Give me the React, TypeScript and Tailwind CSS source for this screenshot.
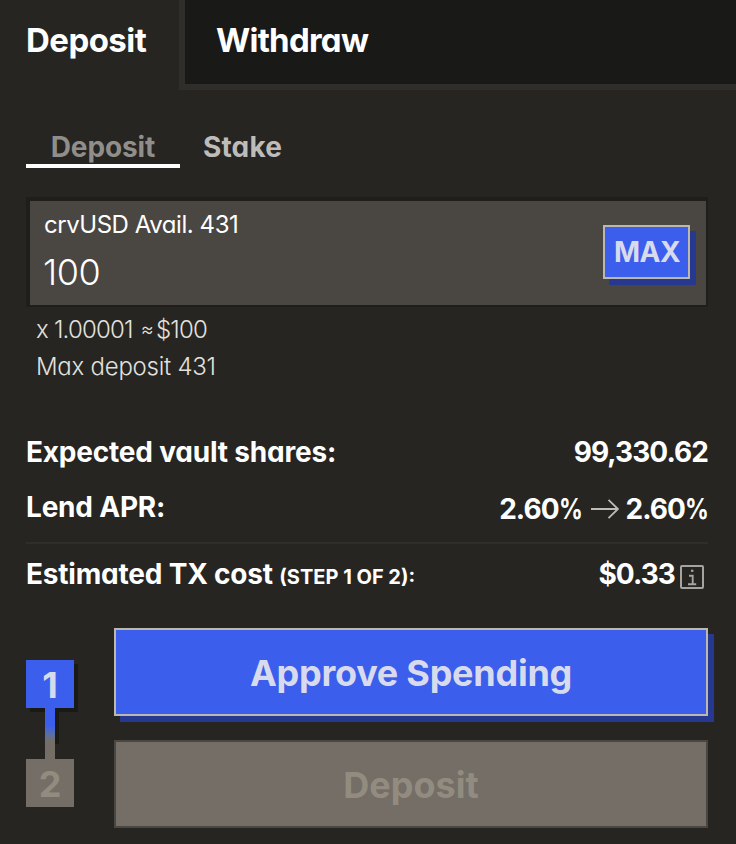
import type { ReactNode } from "react";

const steps = [
  { id: 1, active: true },
  { id: 2, active: false },
];

function ArrowRight() {
  return (
    <svg
      className="mr-[7px] ml-[9px] h-[20px] w-[28px] shrink-0"
      viewBox="0 0 28 20"
      fill="none"
      stroke="#bdbcb8"
      strokeWidth="1.8"
    >
      <path d="M0 10H27M17.5 0.8L27 10L17.5 19.2" />
    </svg>
  );
}

function InfoIcon() {
  return (
    <svg
      className="mt-[5px] mr-1 ml-[5px] h-6 w-6 shrink-0"
      viewBox="0 0 24 24"
      fill="none"
      stroke="#a5a4a1"
    >
      <rect x="1" y="1" width="22" height="22" rx="1" strokeWidth="2" />
      <path d="M9 10.7H12.7V19.2M8 19.2H16.2" strokeWidth="1.9" />
      <path d="M11 5.8H13.4" strokeWidth="2.2" />
    </svg>
  );
}

function Percent({ value }: { value: string }) {
  return (
    <span className="flex">
      {value}
      <span className="w-[23px] origin-left scale-x-[0.84]">%</span>
    </span>
  );
}

function Row({ label, children }: { label: ReactNode; children: ReactNode }) {
  return (
    <div className="flex h-9 items-center justify-between text-[28px] font-bold whitespace-nowrap">
      <div className="tracking-[-0.2px]">{label}</div>
      <div className="flex items-center tracking-[-0.95px]">{children}</div>
    </div>
  );
}

export default function App() {
  return (
    <div className="h-[844px] w-[736px] overflow-hidden bg-[#262521] font-['Inter','Liberation_Sans',sans-serif] text-white [font-feature-settings:'cv11']">
      <div className="flex h-[90px] text-[33px] leading-10 font-bold">
        <button className="w-[179px] pb-[10px] pl-[26px] text-left">
          <span className="tracking-[-0.55px]">Deposit</span>
        </button>
        <button className="flex-1 border-b-6 border-l-6 border-[#2f2e2b] bg-[#191917] pb-1 pl-[31px] text-left">
          <span className="tracking-[-0.75px]">Withdraw</span>
        </button>
      </div>

      <div className="px-[26px] pt-[42px] pr-7">
        <div className="flex h-9 text-[28px] leading-[28px] font-bold">
          <button className="w-[154px] border-b-4 border-white pb-[3px] tracking-[-0.1px] text-[#8f8e8b]">
            Deposit
          </button>
          <button className="ml-[23px] border-b-4 border-transparent pb-[3px] tracking-[0.15px] text-[#bdbcba]">
            Stake
          </button>
        </div>

        <div className="mt-[29px] flex h-[110px] items-start justify-between border-2 border-t-4 border-l-4 border-[#1f1e1b] bg-[#4a4641] pr-4 pl-[14px]">
          <div className="pt-2">
            <div className="text-[24px] leading-8 tracking-[-0.45px]">
              crvUSD Avail. 431
            </div>
            <div className="mt-[7px] -ml-px text-[36px] leading-[48px] font-light tracking-[-0.5px]">
              100
            </div>
          </div>
          <button className="mt-6 h-[54px] w-[87px] border-2 border-[#bdb8ac] bg-[#3b5fec] pb-px pl-px text-[28px] font-bold tracking-[-0.5px] text-[#d8dbee] shadow-[6px_6px_0_#263890]">
            MAX
          </button>
        </div>

        <div className="mt-1 pl-[10px] text-[24px] leading-[37px] font-light text-[#e2e1df]">
          <div className="flex h-[37px] tracking-[-0.8px]">
            <span>x 1.00001</span>
            <span className="ml-[8px] text-[20px] leading-9">≈</span>
            <span className="ml-[3px]">$100</span>
          </div>
          <div className="h-[37px] tracking-[-0.25px]">Max deposit 431</div>
        </div>

        <div className="mt-[49px]">
          <Row label="Expected vault shares:">99,330.62</Row>
          <div className="h-[19px]" />
          <Row label="Lend APR:">
            <div className="flex items-center pt-1">
              <Percent value="2.60" />
              <ArrowRight />
              <Percent value="2.60" />
            </div>
          </Row>
          <div className="mt-[17px] border-t-2 border-[#2f2e2b]" />
          <div className="mt-3">
            <Row
              label={
                <>
                  Estimated TX cost{" "}
                  <span className="text-[20px] tracking-normal">
                    (STEP 1 OF 2):
                  </span>
                </>
              }
            >
              $0.33
              <InfoIcon />
            </Row>
          </div>
        </div>

        <div className="mt-9 flex">
          <div className="flex w-[88px] flex-col pt-8 text-[36px] font-bold">
            <div className="flex h-12 w-12 items-center justify-center bg-[#3b5fec] pt-[2px] text-[#d8dbee] shadow-[4px_4px_0_#191916]">
              {steps[0].id}
            </div>
            <div className="relative ml-[19px] h-[51px] w-[10px] bg-linear-to-b from-[#3b5fec] from-35% to-[#746e67] to-65%">
              <div className="absolute top-1 left-[10px] h-8 w-1 bg-[#191916]" />
            </div>
            <div className="flex h-12 w-12 items-center justify-center bg-[#746e67] pt-[2px] text-[#928c80]">
              {steps[1].id}
            </div>
          </div>
          <div className="flex flex-1 flex-col gap-6 text-[36px] font-bold">
            <button className="h-[88px] border-2 border-[#bdb8ac] bg-[#3b5fec] pt-[2px] tracking-[-0.25px] text-[#d8dbee] shadow-[6px_6px_0_#263890]">
              Approve Spending
            </button>
            <button className="h-[88px] border-2 border-[#4a4641] bg-[#746e67] pt-[2px] text-[#928c80]">
              Deposit
            </button>
          </div>
        </div>
      </div>
    </div>
  );
}
